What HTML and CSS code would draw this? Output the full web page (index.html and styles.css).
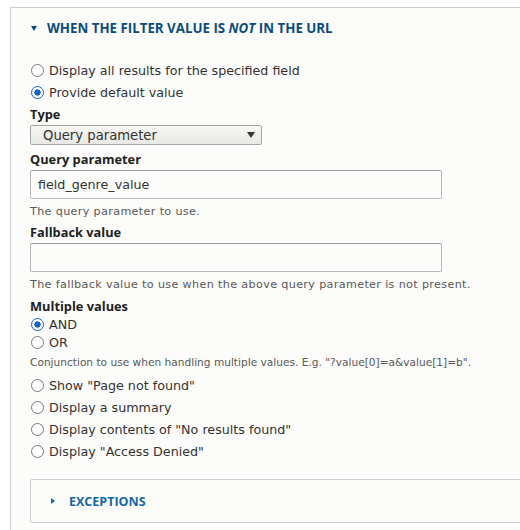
FILE: index.html
```html
<!DOCTYPE html>
<html lang="en">
<head>
<meta charset="utf-8">
<title>Filter settings</title>
<link rel="stylesheet" href="styles.css">
</head>
<body>
<div class="fieldset">
  <div class="summary">
    <span class="tri-down"></span>
    <span class="summary-text">When the filter value is <em>not</em> in the URL</span>
  </div>

  <div class="radios first">
    <label class="radio-row"><input type="radio" name="default_action"><span>Display all results for the specified field</span></label>
    <label class="radio-row"><input type="radio" name="default_action" checked><span>Provide default value</span></label>
  </div>

  <div class="field-label l-type">Type</div>
  <div class="select"><span>Query parameter</span><span class="select-arrow"></span></div>

  <div class="field-label l-qp">Query parameter</div>
  <div class="text-input">field_genre_value</div>
  <div class="description">The query parameter to use.</div>

  <div class="field-label l-fb">Fallback value</div>
  <div class="text-input"></div>
  <div class="description">The fallback value to use when the above query parameter is not present.</div>

  <div class="field-label l-mv">Multiple values</div>
  <div class="radios tight">
    <label class="radio-row"><input type="radio" name="multiple" checked><span>AND</span></label>
    <label class="radio-row"><input type="radio" name="multiple"><span>OR</span></label>
  </div>
  <div class="description conj">Conjunction to use when handling multiple values. E.g. "?value[0]=a&amp;value[1]=b".</div>

  <div class="radios second">
    <label class="radio-row"><input type="radio" name="default_action"><span>Show "Page not found"</span></label>
    <label class="radio-row"><input type="radio" name="default_action"><span>Display a summary</span></label>
    <label class="radio-row"><input type="radio" name="default_action"><span>Display contents of "No results found"</span></label>
    <label class="radio-row"><input type="radio" name="default_action"><span>Display "Access Denied"</span></label>
  </div>

  <div class="details">
    <span class="tri-right"></span>
    <span class="details-text">Exceptions</span>
  </div>
</div>
</body>
</html>
```
FILE: styles.css
```css
html, body {
  margin: 0;
  padding: 0;
  background: #ffffff;
  overflow: hidden;
}
body {
  width: 520px;
  height: 530px;
  font-family: "DejaVu Sans", Verdana, sans-serif;
  color: #333333;
}
.fieldset {
  margin: 7px 0 0 10px;
  width: 540px;
  height: 560px;
  border: 1px solid #cccccc;
  background: #fcfcfa;
  padding: 9px 0 0 19px;
  box-sizing: border-box;
  display: flex;
  flex-direction: column;
  align-items: flex-start;
}
.summary {
  height: 22px;
  display: flex;
  align-items: center;
  color: #0b4c7c;
  font-family: "Open Sans", "Noto Sans", sans-serif;
  font-weight: 700;
  font-size: 13.3px;
  text-transform: uppercase;
}
.tri-down {
  width: 0;
  height: 0;
  border-left: 3px solid transparent;
  border-right: 3px solid transparent;
  border-top: 5px solid #0b4c7c;
  margin: 0 10px 0 1px;
}
.summary em {
  font-style: italic;
}
.radios {
  display: flex;
  flex-direction: column;
}
.radios.first { margin-top: 20px; }
.radios.second { margin-top: 3px; }
.radio-row {
  height: 22px;
  display: flex;
  align-items: center;
  font-size: 12.7px;
  color: #333333;
}
.radios.tight .radio-row { height: 18px; }
.radio-row input {
  appearance: none;
  -webkit-appearance: none;
  width: 13px;
  height: 13px;
  margin: 0 5px 0 1px;
  border: 1px solid #7a7a7a;
  border-radius: 50%;
  background: #ffffff;
  box-sizing: border-box;
  flex: none;
}
.radio-row input:checked {
  border: 1.6px solid #1863c9;
  background: radial-gradient(circle, #1863c9 0, #1863c9 2.9px, #ffffff 3.4px);
}
.field-label {
  height: 20px;
  display: flex;
  align-items: center;
  font-family: "Open Sans", "Noto Sans", sans-serif;
  font-weight: 700;
  font-size: 12.8px;
  color: #222222;
}
.l-type { margin-top: 1px; }
.l-qp { margin-top: 4px; }
.l-fb { margin-top: 2px; }
.l-mv { margin-top: 3px; margin-bottom: -1px; }
.select {
  margin-top: 1px;
  width: 232px;
  height: 20px;
  box-sizing: border-box;
  border: 1px solid #a6a6a6;
  border-radius: 2px;
  background: linear-gradient(#f6f6f3, #e8e8e4);
  display: flex;
  align-items: center;
  justify-content: space-between;
  padding: 0 6px 0 12px;
  font-size: 13.2px;
  color: #333333;
}
.select-arrow {
  width: 0;
  height: 0;
  border-left: 4.5px solid transparent;
  border-right: 4.5px solid transparent;
  border-top: 6px solid #333333;
}
.text-input {
  margin-top: 1px;
  width: 412px;
  height: 29px;
  box-sizing: border-box;
  border: 1px solid #b8b8b8;
  border-top-color: #999999;
  border-radius: 2px;
  background: #fcfcfa;
  display: flex;
  align-items: center;
  padding: 0 7px;
  font-size: 12.7px;
  color: #333333;
}
.description {
  margin-top: 3px;
  height: 18px;
  display: flex;
  align-items: center;
  font-size: 11.2px;
  letter-spacing: 0.34px;
  color: #595959;
}
.description.conj { margin-top: 2px; font-size: 10.6px; letter-spacing: 0; }
.details {
  margin-top: 17px;
  width: 520px;
  height: 44px;
  box-sizing: border-box;
  border: 1px solid #cccccc;
  border-radius: 2px;
  background: #fcfcfa;
  display: flex;
  align-items: center;
  padding-left: 20px;
}
.tri-right {
  width: 0;
  height: 0;
  border-top: 3px solid transparent;
  border-bottom: 3px solid transparent;
  border-left: 4px solid #1567a8;
  margin-right: 14px;
}
.details-text {
  font-family: "Open Sans", "Noto Sans", sans-serif;
  font-weight: 700;
  font-size: 12.5px;
  text-transform: uppercase;
  color: #1567a8;
}
```
